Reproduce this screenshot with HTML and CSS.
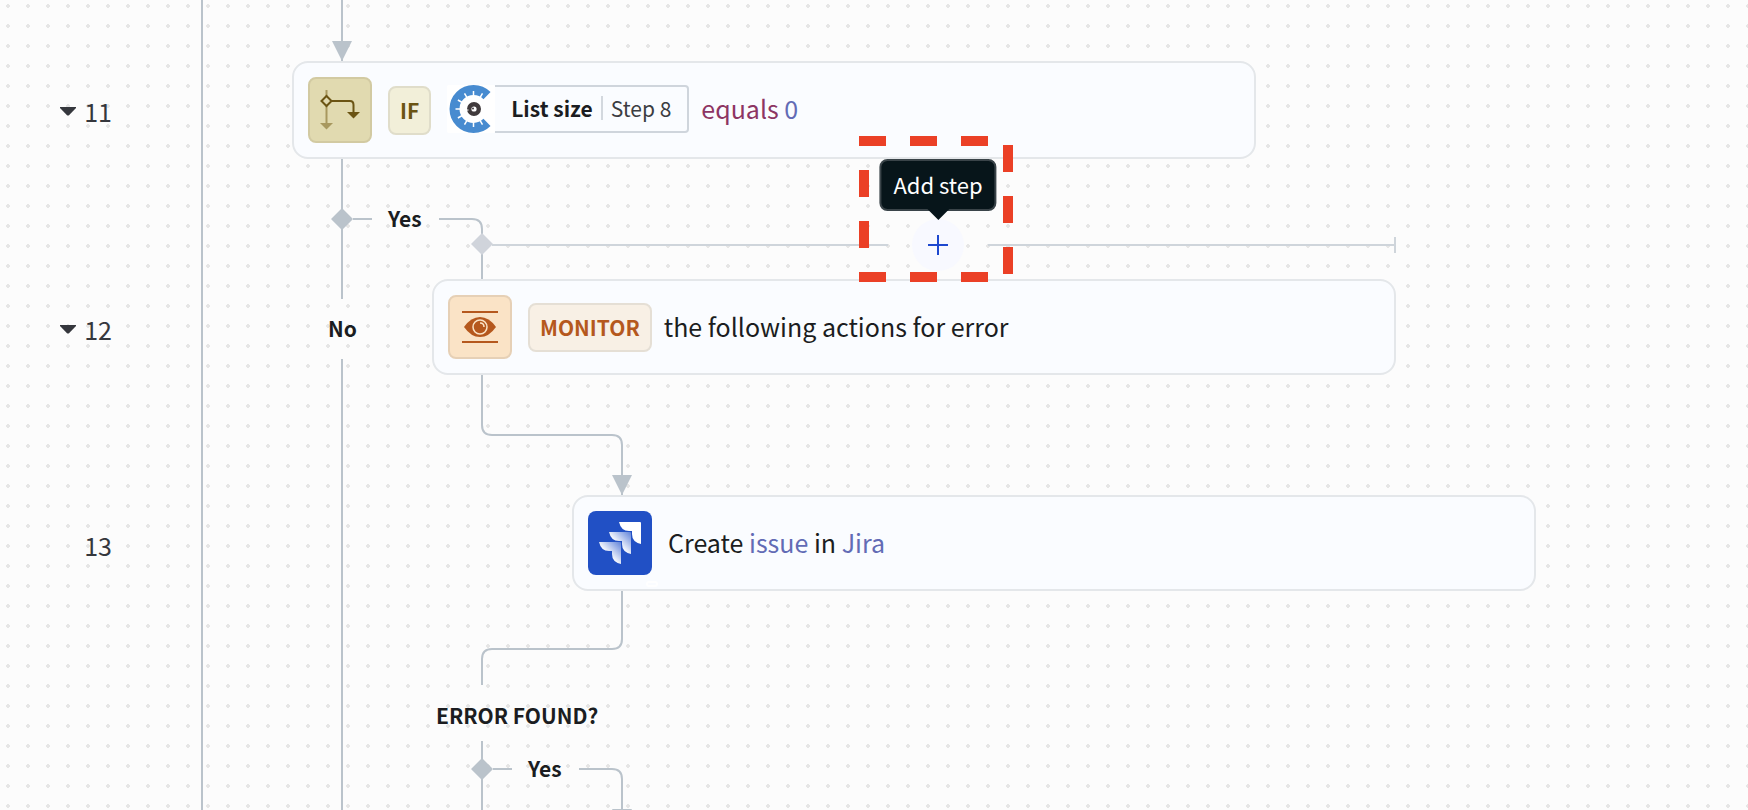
FILE: index.html
```html
<!DOCTYPE html>
<html lang="en">
<head>
<meta charset="utf-8">
<title>Recipe editor</title>
<link rel="stylesheet" href="styles.css">
</head>
<body>
<main class="canvas">
  <svg class="connectors" aria-hidden="true">
    <g class="wire">
      <path d="M202 0V2000M342 0V299M342 359V2000"/>
      <path d="M353 219H372M439 219H472Q482 219 482 229V280"/>
      <path d="M482 374V425Q482 435 492 435H612Q622 435 622 445V496"/>
      <path d="M622 590V639Q622 649 612 649H492Q482 649 482 659V685"/>
      <path d="M482 741V2000M493 769H512M579 769H612Q622 769 622 779V2000"/>
    </g>
    <g class="mark">
      <path d="M332 41H352L342 61ZM612 475H632L622 495ZM612 809H632L622 829Z"/>
      <path d="M342 208L353 219L342 230L331 219ZM482 758L493 769L482 780L471 769Z"/>
    </g>
    <path class="mark-light" d="M482 233L493 244L482 255L471 244Z"/>
  </svg>

  <div class="line-number row-11"><button class="toggle" aria-label="Collapse step 11"><svg width="16" height="9" viewBox="0 0 16 9"><path d="M0 0H16V1L9 8.200Q8 9 7 8.200L0 1Z"/></svg></button><span>11</span></div>
  <div class="line-number row-12"><button class="toggle" aria-label="Collapse step 12"><svg width="16" height="9" viewBox="0 0 16 9"><path d="M0 0H16V1L9 8.200Q8 9 7 8.200L0 1Z"/></svg></button><span>12</span></div>
  <div class="line-number row-13"><span>13</span></div>

  <article class="step step-if">
    <div class="tile tile-if">
      <svg width="60" height="62" viewBox="0 0 60 62" fill="none" stroke-width="2">
        <path d="M16.500 11V46" stroke="#a8985f"/>
        <path d="M10 44H23L16.500 50.500Z" fill="#a8985f"/>
        <path d="M22 22H40Q43.500 22 43.500 26V34" stroke="#6b5413"/>
        <path d="M37 33H50L43.500 39.500Z" fill="#6b5413"/>
        <path d="M16.500 17L21.500 22L16.500 27L11.500 22Z" fill="#e1dab0" stroke="#6b5413"/>
      </svg>
    </div>
    <span class="tag tag-if">IF</span>
    <span class="pill">
      <svg width="48" height="48" viewBox="0 0 48 48">
        <rect width="48" height="48" rx="2" fill="#fff"/>
        <path d="M40 10.600A19 19 0 1 0 40 37.400" fill="none" stroke="#478bd0" stroke-width="10"/>
        <path d="M26.500 11V6M20 12.700L17.500 8.400M15.200 17.500L10.900 15M13.500 24H8.500M15.200 30.500L10.900 33M20 35.300L17.500 39.600M26.500 37V42M33 12.700L35.500 8.400M33 35.300L35.500 39.600" stroke="#fff" stroke-width="1.500"/>
        <circle cx="27" cy="24" r="4.800" fill="none" stroke="#403a3c" stroke-width="4.400"/>
        <path d="M19.500 25H21.500" stroke="#fff"/>
        <circle cx="26" cy="23.500" r="1" fill="#403a3c"/>
      </svg>
      <span class="pill-body"><b>List size</b><span class="pill-step">Step 8</span></span>
    </span>
    <p class="text"><span class="operator">equals</span> <span class="value">0</span></p>
  </article>

  <div class="label yes-1">Yes</div>
  <div class="label no-1">No</div>

  <article class="step step-monitor">
    <div class="tile tile-monitor">
      <svg width="60" height="60" viewBox="0 0 60 60">
        <path d="M12 15H48M12 45H48" stroke="#b5581d" stroke-width="2"/>
        <path d="M14 30Q21 20 30 20T46 30Q39 40 30 40T14 30Z" fill="#b5581d"/>
        <circle cx="30" cy="30" r="7" fill="#b5581d" stroke="#fae3c6" stroke-width="1.500"/>
        <path d="M30 26Q34 26 34 30" fill="none" stroke="#fae3c6" stroke-width="1.500"/>
      </svg>
    </div>
    <span class="tag tag-monitor">MONITOR</span>
    <p class="text">the following actions for error</p>
  </article>

  <article class="step step-jira">
    <div class="tile tile-jira">
      <svg width="64" height="64" viewBox="0 0 64 64">
        <defs>
          <linearGradient id="fold" x1="1" y1="0" x2="0.300" y2="0.700">
            <stop offset="0" stop-color="#5f82d9"/>
            <stop offset="0.850" stop-color="#fff"/>
          </linearGradient>
        </defs>
        <path d="M31 11H52Q53 11 53 12V33Q44 31 44 23V20H41Q33 20 31 11Z" fill="#fff"/>
        <path d="M21 21H42Q43 21 43 22V43Q34 41 34 33V30H31Q23 30 21 21Z" fill="url(#fold)"/>
        <path d="M11 31H32Q33 31 33 32V53Q24 51 24 43V40H21Q13 40 11 31Z" fill="url(#fold)"/>
      </svg>
    </div>
    <p class="text">Create <span class="value">issue</span> in <span class="value">Jira</span></p>
    <span class="handle"></span>
  </article>

  <div class="insert">
    <span class="insert-line"></span>
    <button class="add" aria-label="Add step" aria-describedby="add-tip"><svg width="20" height="20" viewBox="0 0 20 20"><path d="M10 0V20M0 10H20" stroke="#1e48cf" stroke-width="2"/></svg></button>
    <span class="insert-line insert-end"></span>
    <div class="tooltip" id="add-tip" role="tooltip">Add step</div>
  </div>

  <svg class="highlight" width="154" height="146" viewBox="0 0 154 146" aria-hidden="true">
    <g stroke="#eb4026" stroke-width="10" stroke-dasharray="27 24">
      <path d="M0 5H144"/>
      <path d="M149 9V140"/>
      <path d="M0 141H144"/>
      <path d="M5 34V125"/>
    </g>
  </svg>

  <div class="label error-found">ERROR FOUND?</div>
  <div class="label yes-2">Yes</div>
</main>
</body>
</html>
```

FILE: styles.css
```css
* { box-sizing: border-box; }

body {
  margin: 0;
  font-family: "Noto Sans CJK SC", "Noto Sans", sans-serif;
  color: #1b1d21;
}

.canvas {
  position: relative;
  min-height: 100vh;
  overflow: hidden;
  background: #fcfcfc radial-gradient(circle at 8px 6px, #e6e6e6 2px, transparent 2px) 0 0 / 20px 20px;
}

button {
  padding: 0;
  border: 0;
  background: none;
  font: inherit;
  cursor: pointer;
}

svg { display: block; }

.connectors {
  position: absolute;
  inset: 0;
  width: 100%;
  height: 100%;
}
.wire { fill: none; stroke: #bac3cb; stroke-width: 2; }
.mark { fill: #bac3cb; }
.mark-light { fill: #d0d4db; }

/* Line numbers in the gutter */
.line-number {
  position: absolute;
  left: 48px;
  width: 64px;
  display: flex;
  align-items: center;
  justify-content: flex-end;
  gap: 8px;
  font-size: 25px;
  line-height: 32px;
  color: #35373d;
}
.row-11 { top: 95px; }
.row-12 { top: 313px; }
.row-13 { top: 529px; }
.toggle { fill: #35373d; }

/* Step cards */
.step {
  position: absolute;
  width: 964px;
  padding: 14px;
  display: flex;
  align-items: center;
  gap: 16px;
  border: 2px solid #e4e7ea;
  border-radius: 16px;
  background: #fafcff;
}
.step-if { left: 292px; top: 61px; }
.step-monitor { left: 432px; top: 279px; }
.step-jira { left: 572px; top: 495px; }

.tile {
  flex: none;
  border: 2px solid;
  border-radius: 8px;
}
.tile-if { background: #e1dab0; border-color: #d2caa2; }
.tile-monitor { background: #fae3c6; border-color: #e6d0b6; }
.tile-jira { background: #2150c5; border: 0; }

.tag {
  padding: 0 10px 1px;
  border: 2px solid;
  border-radius: 8px;
  font-size: 21px;
  font-weight: 700;
  line-height: 44px;
}
.tag-if { color: #6b5413; background: #f2efd9; border-color: #e0ddca; }
.tag-monitor { color: #b5581d; background: #f8f0e5; border-color: #e5dfd5; }

.text {
  margin: 0;
  padding-bottom: 2px;
  font-size: 25px;
  line-height: 36px;
}
.tag + .text,
.pill + .text { margin-left: -4px; }
.operator { color: #8d3563; }
.value { color: #626bb5; }

.pill {
  display: flex;
  align-items: stretch;
}
.pill,
.pill + .text { margin-bottom: 2px; }
.pill-body {
  display: flex;
  align-items: center;
  padding: 0 16px 2px;
  border: 2px solid #cfd5dc;
  border-left: 0;
  border-radius: 0 4px 4px 0;
  font-size: 21px;
  line-height: 24px;
}
.pill-step {
  margin-left: 8px;
  padding-left: 8px;
  border-left: 2px solid #d3d8de;
  color: #3b3d42;
}

.handle {
  position: absolute;
  left: 72px;
  bottom: 2px;
  width: 12px;
  height: 6px;
  border: 2px solid #fff;
  border-radius: 3px;
}

.label {
  position: absolute;
  font-size: 21px;
  font-weight: 700;
  line-height: 32px;
}
.yes-1 { left: 388px; top: 202px; }
.no-1 { left: 328px; top: 312px; }
.error-found { left: 436px; top: 699px; }
.yes-2 { left: 528px; top: 752px; }

/* Insertion point between two steps */
.insert {
  position: absolute;
  left: 480px;
  top: 219px;
  width: 916px;
  display: flex;
  align-items: center;
  gap: 24px;
}
.insert-line {
  flex: 1;
  height: 2px;
  background: linear-gradient(#cfd5db, #cfd5db) 12px 0 no-repeat;
}
.insert-end {
  display: flex;
  align-items: center;
  justify-content: flex-end;
  background: #cfd5db;
}
.insert-end::after {
  content: "";
  flex: none;
  width: 2px;
  height: 16px;
  background: #cfd5db;
}
.add {
  flex: none;
  width: 52px;
  height: 52px;
  display: grid;
  place-items: center;
  border-radius: 50%;
  background: #f8f9ff;
}
.tooltip {
  position: absolute;
  left: 50%;
  bottom: calc(100% + 8px);
  transform: translateX(-50%);
  padding: 0 12px 2px;
  border: 2px solid #3a4449;
  border-radius: 8px;
  background: #07151a;
  color: #fff;
  font-size: 22px;
  line-height: 46px;
  white-space: nowrap;
}
.tooltip::after {
  content: "";
  position: absolute;
  left: 50%;
  top: 100%;
  transform: translateX(-50%);
  border: 11px solid transparent;
  border-top-color: #07151a;
  border-bottom: 0;
}

.highlight {
  position: absolute;
  left: 859px;
  top: 136px;
}
```
